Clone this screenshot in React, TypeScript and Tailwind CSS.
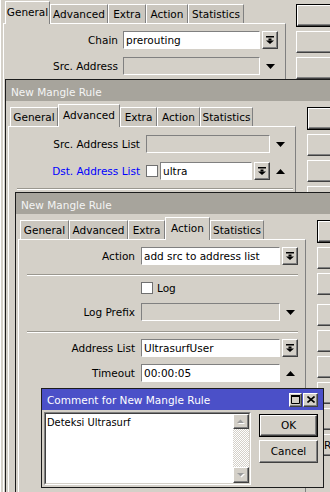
import React from 'react';

const raised =
  'bg-[#d4d0c8] border border-t-white border-l-white border-r-[#404040] border-b-[#404040] shadow-[inset_-1px_-1px_0_#808080]';
const sunken = 'border border-t-[#808080] border-l-[#808080] border-r-white border-b-white';
const panel =
  'flex-1 flex flex-col border-l border-t border-r border-l-white border-t-white border-r-[#808080] bg-[#d4d0c8]';

type Tab = { label: string; w: string };

const tabs1: Tab[] = [
  { label: 'General', w: 'w-[45px]' },
  { label: 'Advanced', w: 'w-[58px]' },
  { label: 'Extra', w: 'w-[38px]' },
  { label: 'Action', w: 'w-[42px]' },
  { label: 'Statistics', w: 'w-[56px]' },
];
const tabs2: Tab[] = [
  { label: 'General', w: 'w-[48px]' },
  { label: 'Advanced', w: 'w-[62px]' },
  { label: 'Extra', w: 'w-[37px]' },
  { label: 'Action', w: 'w-[43px]' },
  { label: 'Statistics', w: 'w-[53px]' },
];
const tabs3: Tab[] = [
  { label: 'General', w: 'w-[49px]' },
  { label: 'Advanced', w: 'w-[59px]' },
  { label: 'Extra', w: 'w-[37px]' },
  { label: 'Action', w: 'w-[45px]' },
  { label: 'Statistics', w: 'w-[54px]' },
];

function TabRow({ tabs, active, h }: { tabs: Tab[]; active: number; h: string }) {
  return (
    <div className={`flex shrink-0 items-end pl-[2px] ${h}`}>
      {tabs.map((t, i) =>
        i === active ? (
          <div
            key={t.label}
            className={`${t.w} relative z-10 -mb-px flex h-[23px] items-center justify-center border-l border-r border-t border-l-white border-r-[#808080] border-t-white bg-[#d4d0c8] pb-[1px]`}
          >
            {t.label}
          </div>
        ) : (
          <div
            key={t.label}
            className={`${t.w} flex h-[19px] items-center justify-center border-l border-r border-t border-l-white border-r-[#808080] border-t-white bg-[#cbc7bf]`}
          >
            {t.label}
          </div>
        ),
      )}
    </div>
  );
}

function DropButton() {
  return (
    <div className={`ml-[2px] flex h-[18px] w-[16px] shrink-0 items-center justify-center ${raised}`}>
      <svg width="8" height="8" viewBox="0 0 8 8">
        <rect x="0" y="0" width="8" height="1.5" fill="#000" />
        <rect x="2.5" y="2.5" width="3" height="2" fill="#000" />
        <path d="M0 4.5h8L4 8z" fill="#000" />
      </svg>
    </div>
  );
}

function Arrow({ up }: { up?: boolean }) {
  return (
    <div className="ml-[2px] flex h-[18px] w-[16px] shrink-0 items-center justify-center">
      <svg width="9" height="5" viewBox="0 0 9 5">
        <path d={up ? 'M0 5h9L4.5 0z' : 'M0 0h9L4.5 5z'} fill="#000" />
      </svg>
    </div>
  );
}

function Input({ value, disabled }: { value?: string; disabled?: boolean }) {
  return (
    <div
      className={`flex h-[18px] min-w-0 flex-1 items-center overflow-hidden whitespace-nowrap pl-[2px] ${sunken} ${
        disabled ? 'bg-[#d4d0c8]' : 'bg-white'
      }`}
    >
      {value}
    </div>
  );
}

function Checkbox() {
  return <div className="h-[12px] w-[12px] shrink-0 border border-[#707070] bg-white" />;
}

function Sep({ className }: { className: string }) {
  return <div className={`h-[2px] shrink-0 border-b border-t border-b-white border-t-[#9a978f] ${className}`} />;
}

function Row({
  label,
  lw,
  blue,
  className,
  children,
}: {
  label: string;
  lw: string;
  blue?: boolean;
  className?: string;
  children: React.ReactNode;
}) {
  return (
    <div className={`mr-[7px] flex h-[18px] shrink-0 items-center ${className ?? ''}`}>
      <div className={`${lw} shrink-0 whitespace-nowrap text-right ${blue ? 'text-[#0000ff]' : ''}`}>{label}</div>
      {children}
    </div>
  );
}

// only the left edge of the side buttons is on screen, so their captions are not drawn
function SideButton({ label, def, className }: { label?: string; def?: boolean; className?: string }) {
  if (def) {
    return (
      <div className={`h-[23px] w-[110px] shrink-0 border border-black ${className ?? ''}`}>
        <div className={`h-full ${raised}`} />
      </div>
    );
  }
  return (
    <div className={`flex h-[22px] w-[110px] shrink-0 items-center whitespace-nowrap pl-[6px] ${raised} ${className ?? ''}`}>
      {label}
    </div>
  );
}

function TitleBar({ text }: { text: string }) {
  return (
    <div className="flex h-[21px] shrink-0 items-center bg-[#a7a49c] pl-[5px] pt-[3px] text-[#f4f4f4]">{text}</div>
  );
}

function ScrollBtn({ up, h }: { up?: boolean; h: string }) {
  return (
    <div className={`flex w-[16px] shrink-0 items-center justify-center ${h} ${raised}`}>
      <svg width="8" height="5" viewBox="0 0 8 5">
        <path d={up ? 'M1 5h7L4.5 1.5z' : 'M1 1h7L4.5 4.5z'} fill="#fff" />
        <path d={up ? 'M0 4h7L3.5 0.5z' : 'M0 0h7L3.5 3.5z'} fill="#9c9c9c" />
      </svg>
    </div>
  );
}

export default function App() {
  return (
    <div className="relative h-[492px] w-[330px] overflow-hidden bg-[#d4d0c8] font-['DejaVu_Sans',sans-serif] text-[10.5px] leading-none text-black">
      {/* back window */}
      <div className="absolute left-0 top-0 flex h-[492px] w-[420px] border-l border-l-white bg-[#d4d0c8] pl-[2px]">
        <div className="flex w-[283px] shrink-0 flex-col">
          <TabRow tabs={tabs1} active={0} h="h-[23px]" />
          <div className={`${panel} pt-[7px]`}>
            <Row label="Chain" lw="w-[119px] pr-[5px]">
              <Input value="prerouting" />
              <DropButton />
            </Row>
            <Row className="mt-[8px]" label="Src. Address" lw="w-[119px] pr-[5px]">
              <Input disabled />
              <Arrow />
            </Row>
          </div>
        </div>
        <div className="ml-[10px] flex shrink-0 flex-col gap-[4px] pt-[4px]">
          <SideButton def />
          <SideButton />
          <SideButton />
          <SideButton />
        </div>
      </div>

      {/* second window */}
      <div className="absolute left-[5px] top-[79px] flex h-[413px] w-[420px] flex-col border-l border-t border-[#1c1c1c] bg-[#d4d0c8]">
        <TitleBar text="New Mangle Rule" />
        <div className="flex flex-1 pl-[2px]">
          <div className="flex w-[288px] shrink-0 flex-col">
            <TabRow tabs={tabs2} active={1} h="h-[25px]" />
            <div className={`${panel} pt-[8px]`}>
              <Row label="Src. Address List" lw="w-[137px] pr-[6px]">
                <Input disabled />
                <Arrow />
              </Row>
              <Row className="mt-[9px]" blue label="Dst. Address List" lw="w-[137px] pr-[6px]">
                <Checkbox />
                <div className="ml-[2px] flex min-w-0 flex-1">
                  <Input value="ultra" />
                </div>
                <DropButton />
                <Arrow up />
              </Row>
              <Sep className="ml-[8px] mr-[2px] mt-[8px]" />
            </div>
          </div>
          <div className="ml-[11px] flex shrink-0 flex-col gap-[4px] pt-[6px]">
            <SideButton def />
            <SideButton />
            <SideButton />
            <SideButton />
          </div>
        </div>
      </div>

      {/* third window */}
      <div className="absolute left-[15px] top-[192px] flex h-[300px] w-[420px] flex-col border-l border-t border-[#1c1c1c] bg-[#d4d0c8]">
        <TitleBar text="New Mangle Rule" />
        <div className="flex flex-1 pl-[2px]">
          <div className="flex w-[288px] shrink-0 flex-col">
            <TabRow tabs={tabs3} active={3} h="h-[25px]" />
            <div className={`${panel} pt-[7px]`}>
              <Row label="Action" lw="w-[122px] pr-[6px]">
                <Input value="add src to address list" />
                <DropButton />
              </Row>
              <Sep className="ml-[8px] mr-[7px] mt-[9px]" />
              <Row className="mt-[3px]" label="" lw="w-[122px]">
                <Checkbox />
                <span className="ml-[4px]">Log</span>
              </Row>
              <Row className="mt-[6px]" label="Log Prefix" lw="w-[122px] pr-[6px]">
                <Input disabled />
                <Arrow />
              </Row>
              <Sep className="ml-[8px] mr-[7px] mt-[10px]" />
              <Row className="mt-[6px]" label="Address List" lw="w-[122px] pr-[6px]">
                <Input value="UltrasurfUser" />
                <DropButton />
              </Row>
              <Row className="mt-[7px]" label="Timeout" lw="w-[122px] pr-[6px]">
                <Input value="00:00:05" />
                <Arrow up />
              </Row>
            </div>
          </div>
          <div className="ml-[11px] flex shrink-0 flex-col gap-[4px] pt-[6px]">
            <SideButton def />
            <SideButton />
            <SideButton />
            <SideButton className="mt-[5px]" />
            <SideButton />
            <SideButton />
            <SideButton />
            <SideButton />
            <SideButton label="Reset All Counters" />
          </div>
        </div>
      </div>

      {/* comment dialog */}
      <div className="absolute left-[41px] top-[388px] flex h-[100px] w-[283px] flex-col border border-[#1c1c1c] bg-[#d4d0c8]">
        <div className="flex h-[21px] shrink-0 items-center bg-[#4b50c8] text-white">
          <span className="flex-1 pl-[5px] pt-[2px]">Comment for New Mangle Rule</span>
          <div className="mr-[5px] flex gap-[1px]">
            <div className={`flex h-[14px] w-[13px] items-center justify-center ${raised}`}>
              <svg width="9" height="9" viewBox="0 0 9 9">
                <path d="M0.5 0.5h8v8h-8z" fill="none" stroke="#000" />
                <rect x="0" y="0" width="9" height="2" fill="#000" />
              </svg>
            </div>
            <div className={`flex h-[14px] w-[15px] items-center justify-center ${raised}`}>
              <svg width="8" height="7" viewBox="0 0 8 7">
                <path d="M0.5 0.5l7 6M7.5 0.5l-7 6" stroke="#000" strokeWidth="1.6" />
              </svg>
            </div>
          </div>
        </div>
        <div className="flex flex-1 pl-[2px] pt-[2px]">
          <div className={`h-[73px] w-[207px] shrink-0 ${sunken}`}>
            <div className="flex h-full border border-b-[#d4d0c8] border-l-[#404040] border-r-[#d4d0c8] border-t-[#404040]">
              <div className="flex-1 bg-white pl-[1px] pt-[3px] font-['DejaVu_Sans_Condensed','DejaVu_Sans',sans-serif] text-[11px]">
                Deteksi Ultrasurf
              </div>
              <div className="flex w-[16px] flex-col">
                <ScrollBtn up h="h-[15px]" />
                <div className="flex-1 bg-[repeating-conic-gradient(#d4d0c8_0%_25%,#ffffff_0%_50%)] bg-[length:2px_2px]" />
                <ScrollBtn h="h-[16px]" />
              </div>
            </div>
          </div>
          <div className="ml-[8px] mt-[2px] flex flex-col gap-[3px]">
            <div className="h-[23px] w-[59px] border border-black">
              <div className={`flex h-full items-center justify-center ${raised}`}>OK</div>
            </div>
            <div className={`flex h-[23px] w-[59px] items-center justify-center ${raised}`}>Cancel</div>
          </div>
        </div>
      </div>
    </div>
  );
}
